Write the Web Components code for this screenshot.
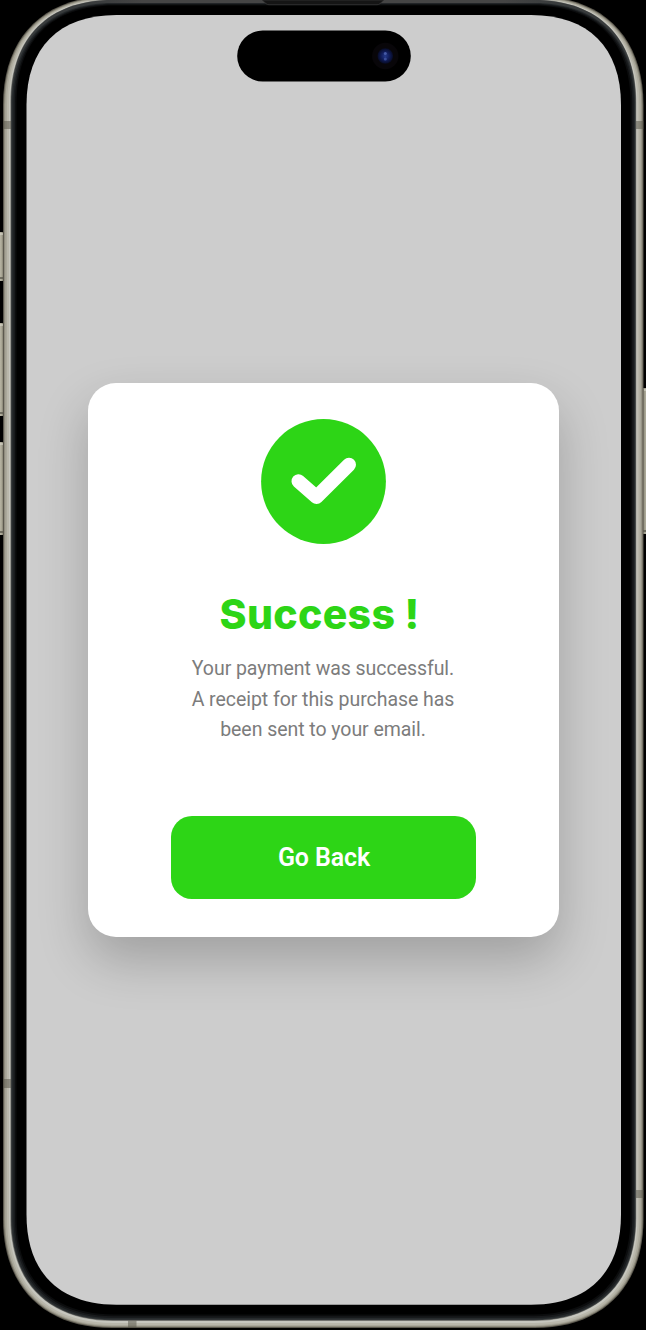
<!DOCTYPE html>
<html lang="en">
<head>
<meta charset="utf-8">
<title>Payment success</title>
<style>
html, body { margin: 0; background: #000; overflow: hidden; }
</style>
</head>
<body>
<phone-frame>
  <success-card>
    <check-badge slot="icon"></check-badge>
    <span slot="title">Success !</span>
    <span slot="message">Your payment was successful.<br>A receipt for this purchase has<br>been sent to your email.</span>
    <action-button slot="action">Go Back</action-button>
  </success-card>
</phone-frame>
<script>
// Continuous-curvature rounded rectangle: e is the corner extent, c the handle offset.
function shape(x0, y0, x1, y1, e, c) {
  return `M${x0} ${y0 + e}C${x0} ${y0 + c} ${x0 + c} ${y0} ${x0 + e} ${y0}` +
    `H${x1 - e}C${x1 - c} ${y0} ${x1} ${y0 + c} ${x1} ${y0 + e}` +
    `V${y1 - e}C${x1} ${y1 - c} ${x1 - c} ${y1} ${x1 - e} ${y1}` +
    `H${x0 + e}C${x0 + c} ${y1} ${x0} ${y1 - c} ${x0} ${y1 - e}Z`;
}

class PhoneFrame extends HTMLElement {
  constructor() {
    super();
    const layers = [
      [3, -4, 643.5, 1328, 109, 41, '#5c594f'],
      [4, -3, 642.5, 1327, 108, 40.5, '#8f8c7e'],
      [5.2, -2.2, 641.3, 1326, 107, 40, '#aaa89b'],
      [7, -1.5, 639.5, 1325, 106, 39, '#b9b7ab'],
      [9, -.8, 637.5, 1323, 104, 38, '#c6c6be'],
      [10.3, -.3, 636.3, 1321, 103, 38, '#85857f'],
      [11, 0, 635.8, 1320.3, 102, 37.5, '#383b3c'],
      [12, 3, 635, 1319.4, 101, 37, '#25292b'],
      [13.5, 3.8, 633.8, 1318, 100, 36.5, '#181a1c'],
      [15, 4.5, 632.2, 1316.3, 99, 36, '#0b0c0d'],
      [16.5, 5.5, 630.5, 1314.5, 98, 35, '#000']
    ];
    const paths = layers.map(a => `<path d="${shape(...a)}" fill="${a[6]}"/>`).join('');
    const key = (x, y, h) => `<g><rect x="${x}" y="${y}" width="5" height="${h}" rx="1.5" fill="url(#key)"/><path d="M${x} ${y + 2}h4" stroke="#e0ded2"/><path d="M${x} ${y + h - 3}h4" stroke="#5a584c" stroke-width="1.5"/></g>`;
    this.attachShadow({ mode: 'open' }).innerHTML = `
<style>
:host { display: grid; width: 646px; height: 1330px; overflow: hidden; background: #000; }
svg, main { grid-area: 1 / 1; }
svg { display: block; }
main { z-index: 1; display: flex; flex-direction: column; align-items: center; padding-top: 383px; }
</style>
<svg width="646" height="1330" viewBox="0 0 646 1330" aria-hidden="true">
  <defs>
    <linearGradient id="key"><stop stop-color="#c2bfae"/><stop offset=".5" stop-color="#aaa796"/><stop offset="1" stop-color="#706d5d"/></linearGradient>
    <linearGradient id="rkey"><stop stop-color="#706d5d"/><stop offset=".5" stop-color="#a6a493"/><stop offset="1" stop-color="#c2bfae"/></linearGradient>
    <linearGradient id="top" x1="0" x2="1"><stop stop-color="#444" stop-opacity="0"/><stop offset=".12" stop-color="#454545"/><stop offset=".88" stop-color="#454545"/><stop offset="1" stop-color="#444" stop-opacity="0"/></linearGradient>
    <radialGradient id="lens"><stop stop-color="#253a8c"/><stop offset=".55" stop-color="#101c58"/><stop offset="1" stop-color="#070b24"/></radialGradient>
  </defs>
  ${key(-1, 232, 49)}${key(-1, 323, 93)}${key(-1, 442, 93)}
  <rect x="642" y="388" width="6" height="146" rx="1.5" fill="url(#rkey)"/>
  <path d="M644 390h2" stroke="#e0ded2"/><path d="M643 531h3" stroke="#5a584c" stroke-width="1.5"/>
  ${paths}
  <rect x="85" y="0" width="476" height="3" fill="url(#top)"/>
  <path d="M262 0L266 3.6Q267 4.7 269 4.7H377Q379 4.7 380 3.6L384 0Z" fill="#151515" stroke="#353535" stroke-width=".8"/>
  <g fill="#555447" fill-opacity=".5">
    <rect x="3" y="121" width="8" height="8"/><rect x="636" y="121" width="7.5" height="8"/>
    <rect x="3" y="1079" width="8" height="9"/><rect x="636" y="1190" width="7.5" height="8"/>
    <rect x="128" y="1320.5" width="8.5" height="7.5"/>
  </g>
  <path d="${shape(26.5, 15, 621, 1304.7, 90, 32.5)}" fill="#cdcdcd"/>
  <rect x="237.2" y="30.5" width="173.6" height="51" rx="25.5" fill="#000"/>
  <circle cx="385.3" cy="56" r="13.2" fill="#080609"/>
  <circle cx="385.3" cy="56" r="7.8" fill="url(#lens)"/>
  <circle cx="385.3" cy="53.4" r="1.5" fill="#465aa6"/><circle cx="385.3" cy="59" r="1.5" fill="#3a4e99"/>
</svg>
<main><slot></slot></main>`;
  }
}
customElements.define('phone-frame', PhoneFrame);

class SuccessCard extends HTMLElement {
  constructor() {
    super();
    this.attachShadow({ mode: 'open' }).innerHTML = `
<style>
:host { box-sizing: border-box; display: flex; flex-direction: column; align-items: center;
  width: 471px; height: 554px; padding-top: 36px; margin-left: 1px; border-radius: 28px; background: #fff;
  box-shadow: 0 23px 50px rgba(0,0,0,.22); }
h1 { margin: 42px 0 0; padding-right: 8px; font: 800 41px/56px Inter, sans-serif; letter-spacing: .3px; color: #2dd516; white-space: nowrap; }
p { margin: 12px 0 0; padding-right: 1px; font: 400 19.5px/30.5px Roboto, sans-serif; letter-spacing: -.05px; color: #7c7c7c; text-align: center; white-space: nowrap; }
footer { margin-top: 70.5px; }
</style>
<slot name="icon"></slot>
<h1><slot name="title"></slot></h1>
<p><slot name="message"></slot></p>
<footer><slot name="action"></slot></footer>`;
  }
}
customElements.define('success-card', SuccessCard);

class CheckBadge extends HTMLElement {
  constructor() {
    super();
    this.attachShadow({ mode: 'open' }).innerHTML = `
<style>:host, svg { display: block; width: 125px; height: 125px; }</style>
<svg viewBox="0 0 125 125" role="img" aria-label="Success">
  <circle cx="62.5" cy="62.5" r="62.4" fill="#2dd516"/>
  <path d="M37.5 62.2L55.5 78L88 45.8" fill="none" stroke="#fff" stroke-width="14" stroke-linecap="round" stroke-linejoin="round"/>
</svg>`;
  }
}
customElements.define('check-badge', CheckBadge);

class ActionButton extends HTMLElement {
  constructor() {
    super();
    this.attachShadow({ mode: 'open' }).innerHTML = `
<style>
:host { display: block; }
button { display: block; width: 305px; height: 83px; padding: 1px 0 0 1px; border: 0; border-radius: 21px;
  background: #2dd516; color: #fff; font: 600 25px/82px Roboto, sans-serif; letter-spacing: -.1px; }
</style>
<button type="button"><slot></slot></button>`;
  }
}
customElements.define('action-button', ActionButton);
</script>
</body>
</html>
